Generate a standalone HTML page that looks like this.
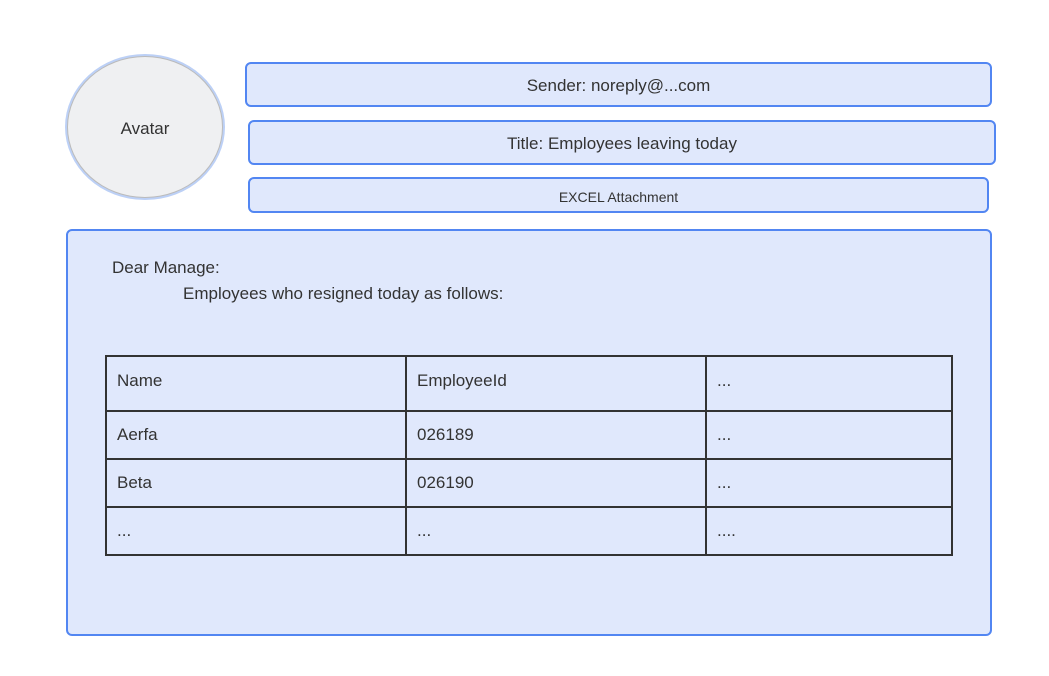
<!DOCTYPE html>
<html><head><style>
body{margin:0;width:1049px;height:676px;background:#fff;position:relative;font-family:"Liberation Sans",sans-serif;color:#333;overflow:hidden}
.b{position:absolute;background:#e0e8fc;border:2px solid #5286f2;border-radius:6px;box-sizing:border-box;display:flex;align-items:center;justify-content:center;font-size:17px;padding-top:3px}
.av{position:absolute;left:67px;top:56px;width:156px;height:142px;border-radius:50%;background:#eff0f2;border:1.5px solid #bbb;box-shadow:0 0 0 2px #bcd0f6;box-sizing:border-box;display:flex;align-items:center;justify-content:center;font-size:17px;padding-top:3px}
.t{position:absolute;font-size:17px}
table{position:absolute;left:105px;top:355px;border-collapse:collapse;font-size:17px}
td{border:2px solid #333;padding:0 0 0 10px;box-sizing:border-box}
</style></head><body>
<div class="av">Avatar</div>
<div class="b" style="left:245px;top:62px;width:747px;height:45px">Sender: noreply@...com</div>
<div class="b" style="left:248px;top:120px;width:748px;height:45px">Title: Employees leaving today</div>
<div class="b" style="left:248px;top:177px;width:741px;height:36px;font-size:14px">EXCEL Attachment</div>
<div class="b" style="left:66px;top:229px;width:926px;height:407px"></div>
<div class="t" style="left:112px;top:258px">Dear Manage:</div>
<div class="t" style="left:183px;top:284px">Employees who resigned today as follows:</div>
<table>
<tr style="height:55px"><td style="width:300px;padding-bottom:6px">Name</td><td style="width:300px;padding-bottom:6px">EmployeeId</td><td style="width:246px;padding-bottom:6px">...</td></tr>
<tr style="height:48px"><td>Aerfa</td><td>026189</td><td>...</td></tr>
<tr style="height:48px"><td>Beta</td><td>026190</td><td>...</td></tr>
<tr style="height:48px"><td>...</td><td>...</td><td>....</td></tr>
</table>
</body></html>
